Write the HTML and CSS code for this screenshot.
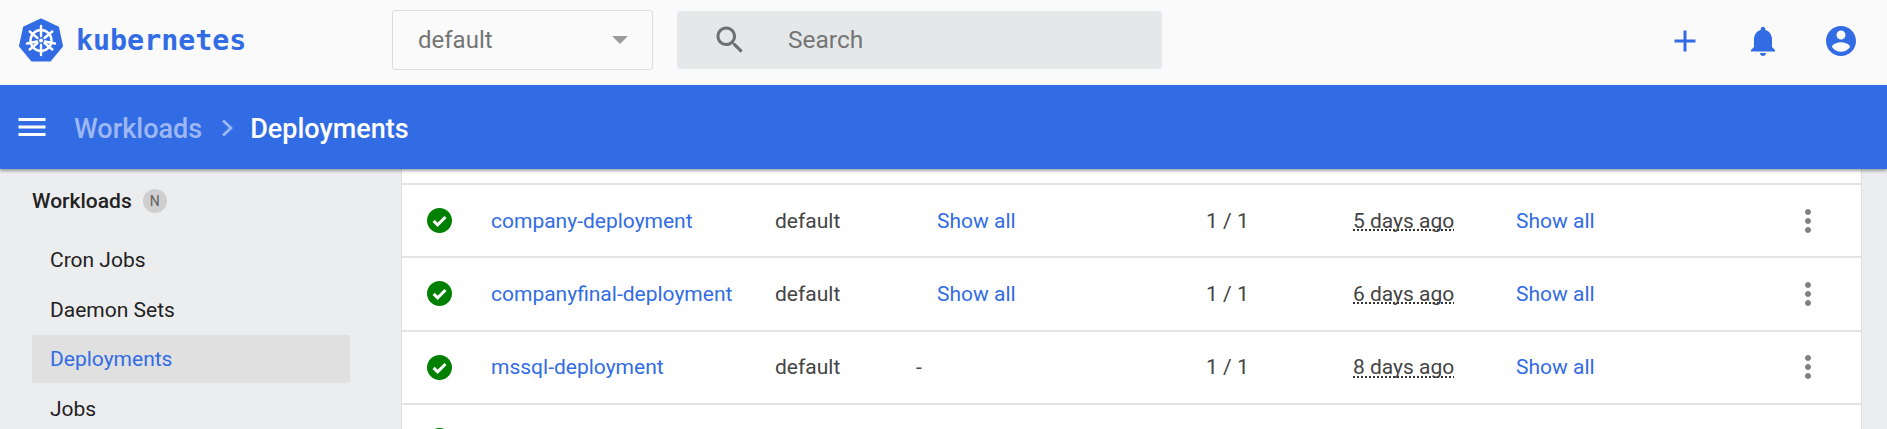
FILE: index.html
```html
<!DOCTYPE html>
<html lang="en">
<head>
<meta charset="utf-8">
<title>Deployments - Kubernetes Dashboard</title>
<link rel="stylesheet" href="styles.css">
</head>
<body>
<header class="topbar">
  <div class="brand">
    <svg class="logo" viewBox="0 0 44 44">
      <path class="logo-hept" d="M22 1.5 39 9.5 43 28 31 42.5H13L1 28 5 9.5Z"/>
      <g class="logo-wheel">
        <circle cx="22" cy="22.5" r="10.5"/>
        <path d="M22 8V18M22 27V37M10.7 13.5 18.5 20M25.5 25 33.3 31.5M33.3 13.5 25.5 20M18.5 25 10.7 31.5M8 25.5 18 23.5M26 23.5 36 25.5"/>
      </g>
      <circle class="logo-hub" cx="22" cy="22.5" r="2"/>
    </svg>
    <span class="wordmark">kubernetes</span>
  </div>
  <div class="ns-select">
    <span>default</span>
    <i class="caret"></i>
  </div>
  <div class="search">
    <svg class="icon search-icon" viewBox="0 0 24 24"><path d="M15.5 14h-.79l-.28-.27C15.41 12.59 16 11.11 16 9.5 16 5.91 13.09 3 9.5 3S3 5.91 3 9.5 5.91 16 9.5 16c1.61 0 3.09-.59 4.23-1.57l.27.28v.79l5 4.99L20.49 19l-4.99-5zm-6 0C7.01 14 5 11.99 5 9.5S7.01 5 9.5 5 14 7.01 14 9.5 11.99 14 9.5 14z"/></svg>
    <span class="search-text">Search</span>
  </div>
  <div class="actions">
    <svg class="icon" viewBox="0 0 24 24"><path d="M19 13h-6v6h-2v-6H5v-2h6V5h2v6h6v2z"/></svg>
    <svg class="icon" viewBox="0 0 24 24"><path d="M12 22c1.1 0 2-.9 2-2h-4c0 1.1.89 2 2 2zm6-6v-5c0-3.07-1.64-5.64-4.5-6.32V4c0-.83-.67-1.5-1.5-1.5s-1.5.67-1.5 1.5v.68C7.63 5.36 6 7.92 6 11v5l-2 2v1h16v-1l-2-2z"/></svg>
    <svg class="icon" viewBox="0 0 24 24"><path d="M12 2C6.48 2 2 6.48 2 12s4.48 10 10 10 10-4.48 10-10S17.52 2 12 2zm0 3c1.66 0 3 1.34 3 3s-1.34 3-3 3-3-1.34-3-3 1.34-3 3-3zm0 14.2c-2.5 0-4.71-1.28-6-3.22.03-1.99 4-3.08 6-3.08 1.99 0 5.97 1.09 6 3.08-1.29 1.94-3.5 3.22-6 3.22z"/></svg>
  </div>
</header>

<nav class="toolbar">
  <svg class="icon menu-icon" viewBox="0 0 24 24"><path d="M3 18h18v-2H3v2zm0-5h18v-2H3v2zm0-7v2h18V6H3z"/></svg>
  <span class="crumb">Workloads</span>
  <svg class="chevron" viewBox="0 0 12 18"><path d="M2 1.5 10 9 2 16.500"/></svg>
  <span class="crumb-current">Deployments</span>
</nav>

<div class="shell">
  <aside class="sidebar">
    <div class="side-head">
      <span>Workloads</span>
      <span class="badge">N</span>
    </div>
    <a class="side-item">Cron Jobs</a>
    <a class="side-item">Daemon Sets</a>
    <a class="side-item active">Deployments</a>
    <a class="side-item">Jobs</a>
  </aside>
  <main class="content">
    <section class="card">
      <div class="row">
        <svg class="status" viewBox="2 2 20 20"><path d="M12 2C6.48 2 2 6.48 2 12s4.480 10 10 10 10-4.480 10-10S17.520 2 12 2z"/><path class="tick" d="M7.300 12.300 10.500 15.500 16.800 9.200"/></svg>
        <a class="link">company-deployment</a>
        <span class="cell">default</span>
        <a class="link images">Show all</a>
        <span class="cell">1 / 1</span>
        <span class="cell"><span class="age">5 days ago</span></span>
        <a class="link">Show all</a>
        <svg class="more" viewBox="0 0 24 24"><path d="M12 8c1.100 0 2-.9 2-2s-.9-2-2-2-2 .9-2 2 .9 2 2 2zm0 2c-1.100 0-2 .9-2 2s.9 2 2 2 2-.9 2-2-.9-2-2-2zm0 6c-1.100 0-2 .9-2 2s.9 2 2 2 2-.9 2-2-.9-2-2-2z"/></svg>
      </div>
      <div class="row">
        <svg class="status" viewBox="2 2 20 20"><path d="M12 2C6.48 2 2 6.48 2 12s4.480 10 10 10 10-4.480 10-10S17.520 2 12 2z"/><path class="tick" d="M7.300 12.300 10.500 15.500 16.800 9.200"/></svg>
        <a class="link">companyfinal-deployment</a>
        <span class="cell">default</span>
        <a class="link images">Show all</a>
        <span class="cell">1 / 1</span>
        <span class="cell"><span class="age">6 days ago</span></span>
        <a class="link">Show all</a>
        <svg class="more" viewBox="0 0 24 24"><path d="M12 8c1.100 0 2-.9 2-2s-.9-2-2-2-2 .9-2 2 .9 2 2 2zm0 2c-1.100 0-2 .9-2 2s.9 2 2 2 2-.9 2-2-.9-2-2-2zm0 6c-1.100 0-2 .9-2 2s.9 2 2 2 2-.9 2-2-.9-2-2-2z"/></svg>
      </div>
      <div class="row">
        <svg class="status" viewBox="2 2 20 20"><path d="M12 2C6.48 2 2 6.48 2 12s4.480 10 10 10 10-4.480 10-10S17.520 2 12 2z"/><path class="tick" d="M7.300 12.300 10.500 15.500 16.800 9.200"/></svg>
        <a class="link">mssql-deployment</a>
        <span class="cell">default</span>
        <span class="cell">-</span>
        <span class="cell">1 / 1</span>
        <span class="cell"><span class="age">8 days ago</span></span>
        <a class="link">Show all</a>
        <svg class="more" viewBox="0 0 24 24"><path d="M12 8c1.100 0 2-.9 2-2s-.9-2-2-2-2 .9-2 2 .9 2 2 2zm0 2c-1.100 0-2 .9-2 2s.9 2 2 2 2-.9 2-2-.9-2-2-2zm0 6c-1.100 0-2 .9-2 2s.9 2 2 2 2-.9 2-2-.9-2-2-2z"/></svg>
      </div>
      <div class="row">
        <svg class="status" viewBox="2 2 20 20"><path d="M12 2C6.48 2 2 6.48 2 12s4.480 10 10 10 10-4.480 10-10S17.520 2 12 2z"/></svg>
      </div>
    </section>
  </main>
</div>
</body>
</html>
```

FILE: styles.css
```css
* { box-sizing: border-box; }

html, body {
  margin: 0;
  height: 429px;
  overflow: hidden;
  font-family: Roboto, "Liberation Sans", sans-serif;
  background: #ecedef;
}

.icon { width: 36px; height: 36px; fill: #326ce5; flex: none; }

.topbar {
  height: 85px;
  padding: 0 28px 5px 19px;
  display: flex;
  align-items: center;
  background: #fafafa;
}

.brand { width: 373px; display: flex; align-items: center; gap: 13px; }
.logo { width: 44px; height: 44px; flex: none; }
.logo-hept { fill: #326ce5; stroke: #326ce5; stroke-width: 2; stroke-linejoin: round; }
.logo-wheel { fill: none; stroke: #fff; stroke-width: 2.4; stroke-linecap: round; }
.logo-hub { fill: #fff; }
.wordmark {
  font-family: "DejaVu Sans Mono", monospace;
  font-size: 28.300px;
  font-weight: 700;
  color: #326ce5;
}

.ns-select {
  width: 261px;
  height: 60px;
  padding: 0 24px 0 25px;
  display: flex;
  align-items: center;
  justify-content: space-between;
  border: 1px solid #dcdcdc;
  border-radius: 3px;
  font-size: 24px;
  color: #757575;
}
.caret {
  width: 0;
  height: 0;
  border-left: 8px solid transparent;
  border-right: 8px solid transparent;
  border-top: 8px solid #9b9b9b;
}

.search {
  width: 485px;
  height: 58px;
  margin-left: 24px;
  padding-left: 35px;
  display: flex;
  align-items: center;
  background: #e4e8e9;
  border-radius: 3px;
  font-size: 24.500px;
  color: #757575;
}
.search-icon { fill: #6f6f6f; }
.search-text { margin-left: 40px; padding-bottom: 2px; }

.actions { margin: 2px 0 0 auto; display: flex; gap: 42px; }

.toolbar {
  position: relative;
  z-index: 2;
  height: 84px;
  padding-left: 14px;
  display: flex;
  align-items: center;
  background: #326ce5;
  box-shadow: 0 2px 3px rgba(0, 0, 0, .35);
  font-size: 27px;
  font-weight: 500;
}
.menu-icon { fill: #fff; }
.crumb { margin-left: 24px; padding-top: 3px; color: #9db7f2; }
.chevron { width: 12px; height: 18px; margin: 2px 17px 0 19px; fill: none; stroke: #9db7f2; stroke-width: 2.800; }
.crumb-current { padding-top: 3px; color: #fff; }

.shell { display: flex; height: 260px; overflow: hidden; }

.sidebar { width: 401px; flex: none; padding: 15px 51px 0 32px; font-size: 21px; color: #222; }
.side-head { height: 33px; margin-bottom: 19px; display: flex; align-items: center; gap: 11px; font-weight: 500; }
.badge {
  width: 24px;
  height: 24px;
  display: flex;
  align-items: center;
  justify-content: center;
  border-radius: 50%;
  background: #cfcfcf;
  font-size: 14px;
  font-weight: 400;
  color: #616161;
}
.side-item { height: 48px; margin-bottom: 1.500px; padding-left: 18px; display: flex; align-items: center; border-radius: 3px; }
.active { background: #e0e0e0; color: #326ce5; }

.content { flex: 1; padding-right: 25px; }
.card { height: 100%; padding-top: 14px; background: #fff; border: 0 solid #e0e0e0; border-width: 0 1px; }

.row {
  height: 73.330px;
  padding-left: 25px;
  display: grid;
  grid-template-columns: 64px 284px 141px 290px 147px 163px 274px 36px;
  align-items: center;
  border-top: 2px solid #e4e4e4;
  font-size: 21px;
  color: #444;
}
.status { width: 25px; height: 25px; fill: #008000; }
.tick { fill: none; stroke: #fff; stroke-width: 2.400; }
.link { color: #326ce5; }
.images { padding-left: 21px; }
.age {
  text-decoration: underline dotted 2px #333;
  text-decoration-skip-ink: none;
  text-underline-offset: 2px;
}
.more { width: 36px; height: 36px; fill: #808080; }
```
